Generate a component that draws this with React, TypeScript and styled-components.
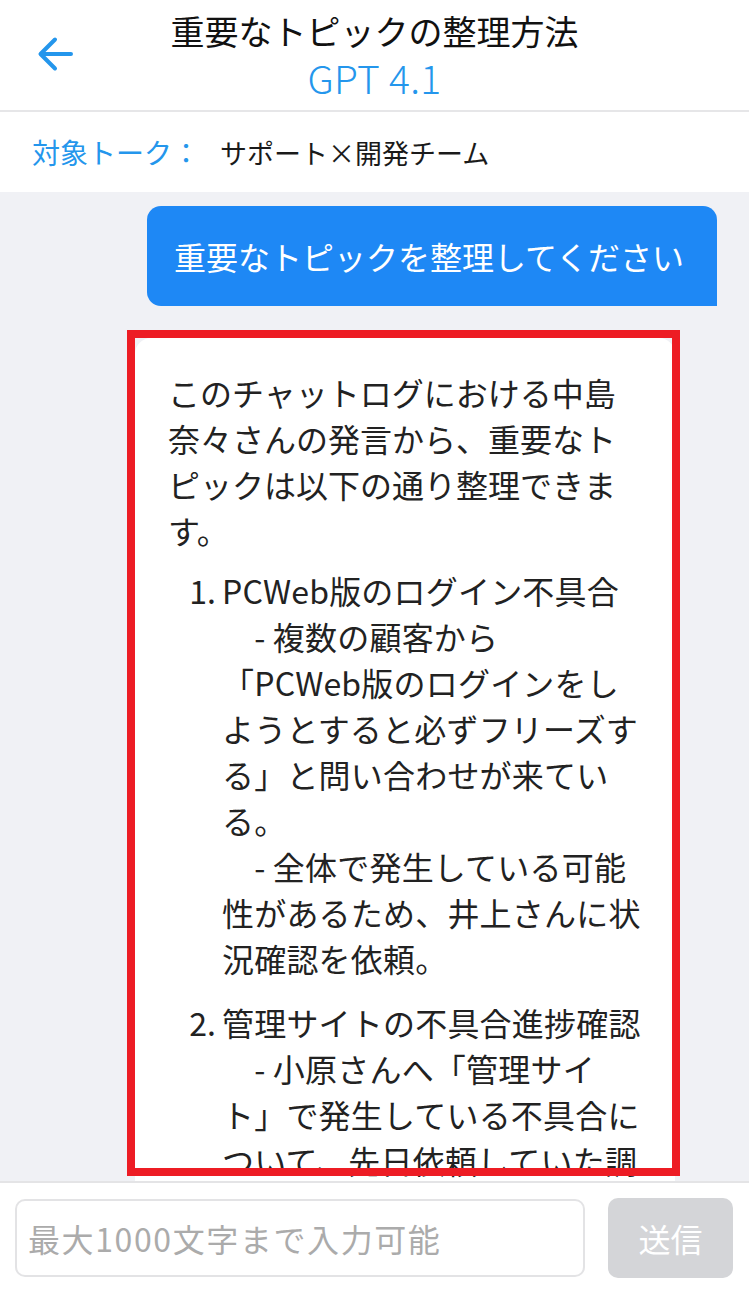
import React from "react";
import styled, { createGlobalStyle } from "styled-components";

const GlobalStyle = createGlobalStyle`
  html, body {
    margin: 0;
    padding: 0;
    background: #ffffff;
  }
  body {
    font-family: "Noto Sans CJK JP", "Noto Sans", sans-serif;
    -webkit-font-smoothing: antialiased;
  }
  * { box-sizing: border-box; }
`;

const BLUE = "#2496ec";

const Page = styled.div`
  width: 749px;
  height: 1293px;
  display: flex;
  flex-direction: column;
  overflow: hidden;
  background: #ffffff;
`;

const Header = styled.header`
  height: 112px;
  flex-shrink: 0;
  display: grid;
  grid-template-columns: 110px 1fr 110px;
  align-items: center;
  border-bottom: 2px solid #e6e6e8;
  background: #ffffff;
`;

const BackButton = styled.button`
  justify-self: start;
  margin-left: 37px;
  margin-top: -2px;
  padding: 0;
  border: none;
  background: transparent;
  display: flex;
  color: ${BLUE};
`;

const TitleBlock = styled.div`
  display: flex;
  flex-direction: column;
  align-items: center;
  padding-bottom: 2px;
`;

const Title = styled.h1`
  margin: 0;
  font-size: 34px;
  line-height: 46px;
  font-weight: 400;
  color: #111111;
  white-space: nowrap;
`;

const Model = styled.div`
  font-size: 39px;
  line-height: 46px;
  font-weight: 300;
  color: ${BLUE};
  letter-spacing: 0.3px;
`;

const TalkRow = styled.div`
  height: 80px;
  flex-shrink: 0;
  display: flex;
  align-items: center;
  padding-left: 32px;
  font-size: 28px;
  background: #ffffff;
`;

const TalkLabel = styled.span`
  color: ${BLUE};
`;

const TalkName = styled.span`
  margin-left: 20px;
  color: #1a1a1a;
  font-size: 27px;
`;

const ChatArea = styled.main`
  position: relative;
  flex: 1;
  min-height: 0;
  overflow: hidden;
  background: #f0f1f5;
  display: flex;
  flex-direction: column;
  padding-top: 14px;
`;

const UserBubble = styled.div`
  flex-shrink: 0;
  align-self: flex-end;
  margin-right: 32px;
  height: 100px;
  display: flex;
  align-items: center;
  padding: 0 33px 0 27px;
  background: #1e88f5;
  color: #ffffff;
  font-size: 32px;
  border-radius: 14px 14px 0 14px;
  white-space: nowrap;
`;

const BotBubble = styled.div`
  flex-shrink: 0;
  margin-top: 32px;
  margin-left: 135px;
  width: 540px;
  background: #ffffff;
  border-radius: 16px 16px 16px 0;
  padding: 31px 35px 40px 33px;
  color: #222222;
  font-size: 32px;
  line-height: 46px;
`;

const Paragraph = styled.p`
  margin: 0;
`;

const Line = styled.span`
  display: block;
  white-space: pre;
`;

const List = styled.ol`
  margin: 14px 0 0;
  padding: 0;
  list-style: none;
`;

const Item = styled.li<{ $first?: boolean }>`
  display: grid;
  grid-template-columns: 54px 1fr;
  margin-top: ${(p) => (p.$first ? "0" : "18px")};
`;

const Num = styled.span`
  text-align: right;
  padding-right: 6px;
`;

const ItemBody = styled.div`
  letter-spacing: 0.2px;
`;

const Highlight = styled.div`
  position: absolute;
  top: 138px;
  left: 127px;
  width: 553px;
  height: 846px;
  border: 8px solid #ed1c24;
  pointer-events: none;
`;

const Footer = styled.footer`
  height: 112px;
  flex-shrink: 0;
  border-top: 2px solid #e4e4e6;
  background: #ffffff;
  display: flex;
  align-items: center;
  gap: 23px;
  padding: 0 16px 0 15px;
`;

const Input = styled.input`
  flex: 1;
  min-width: 0;
  height: 78px;
  border: 2px solid #e3e3e5;
  border-radius: 10px;
  padding: 0 10px 0 11px;
  font-family: "Noto Sans CJK JP", sans-serif;
  font-size: 32px;
  letter-spacing: 1.6px;
  color: #333;
  outline: none;
  background: #ffffff;
  &::placeholder {
    color: #ababab;
  }
`;

const SendButton = styled.button`
  width: 125px;
  height: 80px;
  flex-shrink: 0;
  border: none;
  border-radius: 10px;
  background: #d4d5d8;
  color: #ffffff;
  font-family: "Noto Sans CJK JP", sans-serif;
  font-size: 32px;
  padding: 0;
`;

const BackArrow = () => (
  <svg width="36" height="36" viewBox="0 0 36 36" fill="none">
    <path
      d="M34 18H4M18 3.5L3.5 18L18 32.5"
      stroke="currentColor"
      strokeWidth="4"
      strokeLinecap="round"
      strokeLinejoin="round"
    />
  </svg>
);

const intro = [
  "このチャットログにおける中島",
  "奈々さんの発言から、重要なト",
  "ピックは以下の通り整理できま",
  "す。",
];

const items: string[][] = [
  [
    "PCWeb版のログイン不具合",
    "\u3000- 複数の顧客から",
    "「PCWeb版のログインをし",
    "ようとすると必ずフリーズす",
    "る」と問い合わせが来てい",
    "る。",
    "\u3000- 全体で発生している可能",
    "性があるため、井上さんに状",
    "況確認を依頼。",
  ],
  [
    "管理サイトの不具合進捗確認",
    "\u3000- 小原さんへ「管理サイ",
    "ト」で発生している不具合に",
    "ついて、先日依頼していた調",
    "査の進捗状況を確認。",
  ],
];

export default function App() {
  return (
    <>
      <GlobalStyle />
      <Page>
        <Header>
          <BackButton aria-label="戻る">
            <BackArrow />
          </BackButton>
          <TitleBlock>
            <Title>重要なトピックの整理方法</Title>
            <Model>GPT 4.1</Model>
          </TitleBlock>
          <span />
        </Header>
        <TalkRow>
          <TalkLabel>対象トーク：</TalkLabel>
          <TalkName>サポート×開発チーム</TalkName>
        </TalkRow>
        <ChatArea>
          <UserBubble>重要なトピックを整理してください</UserBubble>
          <BotBubble>
            <Paragraph>
              {intro.map((l) => (
                <Line key={l}>{l}</Line>
              ))}
            </Paragraph>
            <List>
              {items.map((lines, i) => (
                <Item key={i} $first={i === 0}>
                  <Num>{i + 1}.</Num>
                  <ItemBody>
                    {lines.map((l) => (
                      <Line key={l}>{l}</Line>
                    ))}
                  </ItemBody>
                </Item>
              ))}
            </List>
          </BotBubble>
          <Highlight />
        </ChatArea>
        <Footer>
          <Input placeholder="最大1000文字まで入力可能" />
          <SendButton>送信</SendButton>
        </Footer>
      </Page>
    </>
  );
}
